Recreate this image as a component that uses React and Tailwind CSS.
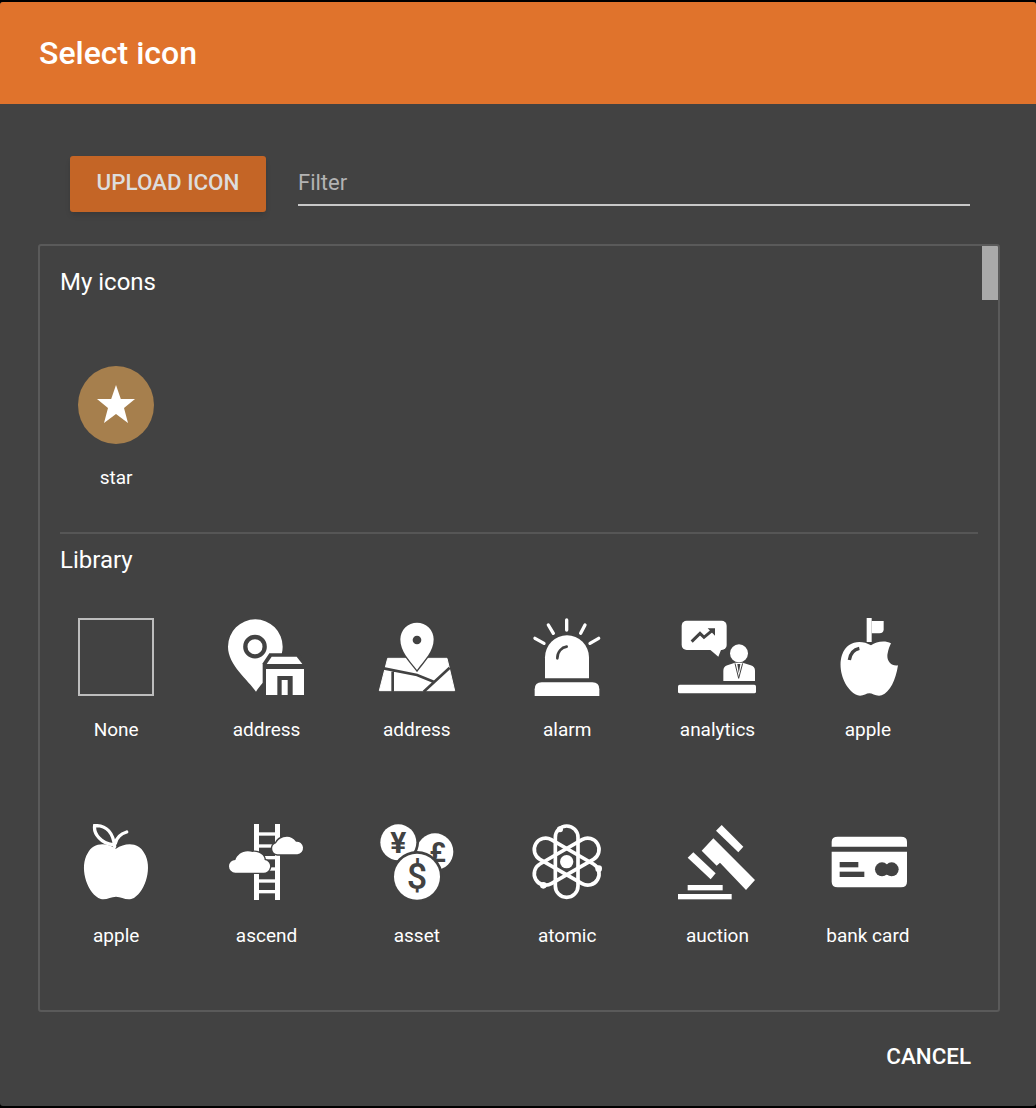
const BG = "#424242";

function Ray({ d }) {
  return <path d={d} stroke="#fff" strokeWidth="10" strokeLinecap="round" fill="none" />;
}

function AddressStore() {
  return (
    <svg viewBox="561 54 234 234" className="w-[78px] h-[78px]">
      <path d="M648 275 C625 240 564 195 564 140 A82 82 0 0 1 728 140 C728 195 670 240 648 275Z" fill="#fff" />
      <circle cx="645" cy="140" r="29" fill="none" stroke={BG} strokeWidth="13" />
      <path d="M688 160 H777 L795 190 V288 H668 V190Z" fill={BG} />
      <path d="M695 170 H770 L787 192 H680Z" fill="#fff" />
      <path d="M678 207 H792 V285 H758 V228 H712 V285 H678Z" fill="#fff" />
      <rect x="725" y="240" width="18" height="45" fill="#fff" />
    </svg>
  );
}

function AddressMap() {
  return (
    <svg viewBox="111 54 234 234" className="w-[78px] h-[78px]">
      <path d="M140 175 H318 L341 272 H115Z" fill="#fff" strokeLinejoin="round" stroke="#fff" strokeWidth="3" />
      <path d="M228 210 C205 180 178 155 178 118 A50 50 0 0 1 278 118 C278 155 250 180 228 210Z" fill="#fff" stroke={BG} strokeWidth="8" paintOrder="stroke" />
      <circle cx="228" cy="120" r="13" fill={BG} />
      <path d="M128 205 L228 225 L278 245 M155 215 V275 M326 203 L248 275" fill="none" stroke={BG} strokeWidth="8" />
    </svg>
  );
}

function Alarm() {
  return (
    <svg viewBox="564 54 234 234" className="w-[78px] h-[78px]">
      <Ray d="M680 60 V90" />
      <Ray d="M625 75 L640 100" />
      <Ray d="M735 75 L722 100" />
      <Ray d="M585 115 L612 130" />
      <Ray d="M776 115 L750 130" />
      <path d="M615 235 V172 A66 66 0 0 1 747 172 V235Z" fill="#fff" />
      <path d="M652 175 C652 155 665 142 680 140" fill="none" stroke={BG} strokeWidth="8" strokeLinecap="round" />
      <path d="M584 288 V268 Q584 247 605 247 H757 Q778 247 778 268 V288Z" fill="#fff" />
    </svg>
  );
}

function Analytics() {
  return (
    <svg viewBox="114 54 234 234" className="w-[78px] h-[78px]">
      <rect x="125" y="62" width="135" height="88" rx="15" fill="#fff" />
      <path d="M205 145 L235 170 L245 145Z" fill="#fff" />
      <path d="M155 125 L180 100 L192 112 L216 92" fill="none" stroke={BG} strokeWidth="9" />
      <path d="M203 85 H225 V107Z" fill={BG} />
      <circle cx="297" cy="160" r="27" fill="#fff" />
      <path d="M250 243 V212 Q250 200 262 196 L285 188 H308 L332 196 Q345 200 345 212 V243Z" fill="#fff" />
      <path d="M285 190 L296 235 L308 190" fill="none" stroke={BG} strokeWidth="3" />
      <path d="M292 192 H301 L299 205 L296 220 L294 205Z" fill={BG} />
      <rect x="114" y="254" width="234" height="26" rx="5" fill="#fff" />
    </svg>
  );
}

function AppleFlag() {
  return (
    <svg viewBox="564 54 234 234" className="w-[78px] h-[78px]">
      <rect x="677" y="54" width="15" height="72" fill="#fff" />
      <path d="M692 63 H728 V88 Q728 100 715 100 H692Z" fill="#fff" />
      <path d="M690 136 C660 118 618 122 603 165 C588 210 613 272 650 286 C665 290 675 280 685 280 C695 280 705 290 722 286 C747 277 764 240 771 196 C750 200 735 180 740 160 C742 148 746 138 750 130 C730 120 705 126 690 136Z" fill="#fff" />
      <path d="M625 180 C628 160 640 148 655 145" fill="none" stroke={BG} strokeWidth="10" />
    </svg>
  );
}

function Apple() {
  return (
    <svg viewBox="51 42 234 234" className="w-[78px] h-[78px]">
      <path d="M168 116 C140 96 98 96 83 130 C58 170 78 242 115 264 C135 274 150 260 168 260 C186 260 200 274 222 264 C258 242 278 170 253 130 C238 96 196 96 168 116Z" fill="#fff" />
      <path d="M158 104 C125 100 100 72 104 47 C140 45 160 70 164 110 M166 100 C170 82 180 72 200 66" fill="none" stroke="#fff" strokeWidth="10" strokeLinecap="round" />
    </svg>
  );
}

function Ascend() {
  return (
    <svg viewBox="501 42 234 234" className="w-[78px] h-[78px]">
      <rect x="582" y="42" width="15" height="228" fill="#fff" />
      <rect x="645" y="42" width="15" height="228" fill="#fff" />
      {[67, 103, 138, 172, 208, 240].map(y => (
        <rect key={y} x="590" y={y} width="62" height="10" fill="#fff" />
      ))}
      <path d="M652 133 A17 17 0 0 1 648 100 C655 82 690 68 708 95 A19 19 0 0 1 712 133Z" fill="#fff" stroke={BG} strokeWidth="8" paintOrder="stroke" />
      <path d="M526 188 A19 19 0 0 1 526 150 C532 132 552 118 578 126 C595 123 614 135 614 150 A19 19 0 0 1 608 188Z" fill="#fff" stroke={BG} strokeWidth="8" paintOrder="stroke" />
    </svg>
  );
}

function Asset() {
  return (
    <svg viewBox="51 42 234 234" className="w-[78px] h-[78px]">
      <circle cx="222" cy="125" r="55" fill="#fff" />
      <text x="230" y="155" textAnchor="middle" fontFamily="Roboto, sans-serif" fontWeight="700" fontSize="84" fill={BG}>£</text>
      <circle cx="112" cy="97" r="54" fill="#fff" stroke={BG} strokeWidth="16" paintOrder="stroke" />
      <circle cx="168" cy="200" r="69" fill="#fff" stroke={BG} strokeWidth="16" paintOrder="stroke" />
      <text x="112" y="130" textAnchor="middle" fontFamily="Roboto, sans-serif" fontWeight="700" fontSize="90" fill={BG}>¥</text>
      <text x="168" y="238" textAnchor="middle" fontFamily="Roboto, sans-serif" fontWeight="500" fontSize="108" fill={BG}>$</text>
    </svg>
  );
}

function Atomic() {
  return (
    <svg viewBox="504 42 234 234" className="w-[78px] h-[78px]">
      {[0, 60, 120].map(a => (
        <rect key={a} x="586" y="48" width="68" height="214" rx="34" fill="none" stroke="#fff" strokeWidth="11" transform={`rotate(${a} 620 155)`} />
      ))}
      <circle cx="620" cy="155" r="20" fill="#fff" />
      <circle cx="600" cy="58" r="9" fill="#fff" />
      <circle cx="550" cy="226" r="10" fill="#fff" />
      <circle cx="716" cy="176" r="10" fill="#fff" />
    </svg>
  );
}

function Auction() {
  return (
    <svg viewBox="54 42 234 234" className="w-[78px] h-[78px]">
      <polygon points="185,45 250,110 235,127 168,62" fill="#fff" />
      <polygon points="100,127 167,190 152,208 83,143" fill="#fff" />
      <polygon points="160,85 125,122 170,167 180,158 258,240 285,210" fill="#fff" />
      <rect x="83" y="225" width="105" height="16" fill="#fff" />
      <rect x="54" y="252" width="161" height="16" fill="#fff" />
    </svg>
  );
}

function BankCard() {
  return (
    <svg viewBox="504 42 234 234" className="w-[78px] h-[78px]">
      <path d="M512 110 V95 Q512 80 530 80 H720 Q738 80 738 95 V110Z" fill="#fff" />
      <path d="M512 125 H738 V215 Q738 232 720 232 H530 Q512 232 512 215Z" fill="#fff" />
      <rect x="536" y="156" width="56" height="16" fill={BG} />
      <rect x="536" y="185" width="74" height="16" fill={BG} />
      <circle cx="663" cy="178" r="21" fill={BG} />
      <circle cx="692" cy="178" r="21" fill={BG} />
    </svg>
  );
}

function StarBadge() {
  return (
    <svg viewBox="0 0 78 78" className="w-[78px] h-[78px]">
      <ellipse cx="39" cy="39" rx="38" ry="39" fill="#a67f4d" />
      <polygon points="39,19 43.8,33 58,33 47,42 51,57 39,48 27,57 31,42 20,33 34.2,33" fill="#fff" />
    </svg>
  );
}

function NoneBox() {
  return <div className="w-[76px] h-[78px] border-2 border-[#bdbdbd]" />;
}

const library = [
  { name: "None", Icon: NoneBox },
  { name: "address", Icon: AddressStore },
  { name: "address", Icon: AddressMap },
  { name: "alarm", Icon: Alarm },
  { name: "analytics", Icon: Analytics },
  { name: "apple", Icon: AppleFlag },
  { name: "apple", Icon: Apple },
  { name: "ascend", Icon: Ascend },
  { name: "asset", Icon: Asset },
  { name: "atomic", Icon: Atomic },
  { name: "auction", Icon: Auction },
  { name: "bank card", Icon: BankCard },
];

function IconCell({ name, Icon, className }) {
  return (
    <div className={"flex flex-col items-center " + className}>
      <div className="h-[78px] flex justify-center">
        <Icon />
      </div>
      <div className="mt-[21px] h-[26px] leading-[26px] text-[19px] text-white">{name}</div>
    </div>
  );
}

export default function App() {
  return (
    <div className="h-[1108px] bg-black py-[2px] font-['Roboto',sans-serif]">
      <div className="h-full flex flex-col bg-[#424242] rounded-[3px] overflow-hidden">
        <div className="h-[102px] shrink-0 flex items-center pl-[39px] bg-[#e0732c]">
          <h2 className="text-[32px] font-medium text-white">Select icon</h2>
        </div>

        <div className="flex gap-[32px] mt-[52px] pl-[70px] pr-[66px]">
          <button className="w-[196px] h-[56px] pb-[3px] rounded-[3px] bg-[#c46526] text-[#dddddd] text-[22.4px] font-medium shadow-md">
            UPLOAD ICON
          </button>
          <div className="flex-1 h-[50px] flex items-center border-b-2 border-[#c8c8c8]">
            <span className="text-[22px] text-[#b3b3b3] mt-[5px]">Filter</span>
          </div>
        </div>

        <div className="relative mt-[32px] ml-[38px] mr-[36px] h-[768px] shrink-0 border-2 border-[#5a5a5a] rounded-[3px] overflow-hidden">
          <div className="absolute right-0 -top-[2px] w-[16px] h-[56px] bg-[#a9a9a9]" />

          <div className="mt-[22px] pl-[20px] h-[28px] leading-[28px] text-[24px] text-white">My icons</div>
          <div className="grid grid-cols-6 w-[902px] ml-[1px] mt-[70px]">
            <IconCell name="star" Icon={StarBadge} className="h-[166px]" />
          </div>
          <div className="h-[2px] bg-[#565656] ml-[20px] mr-[20px]" />

          <div className="mt-[12px] pl-[20px] h-[28px] leading-[28px] text-[24px] text-white">Library</div>
          <div className="grid grid-cols-6 w-[902px] ml-[1px] mt-[44px]">
            {library.map((item, i) => (
              <IconCell key={i} name={item.name} Icon={item.Icon} className="h-[206px]" />
            ))}
          </div>
        </div>

        <div className="flex-1 flex justify-end pt-[28px] pr-[65px]">
          <button className="h-[28px] text-[22.4px] font-medium text-white">CANCEL</button>
        </div>
      </div>
    </div>
  );
}
